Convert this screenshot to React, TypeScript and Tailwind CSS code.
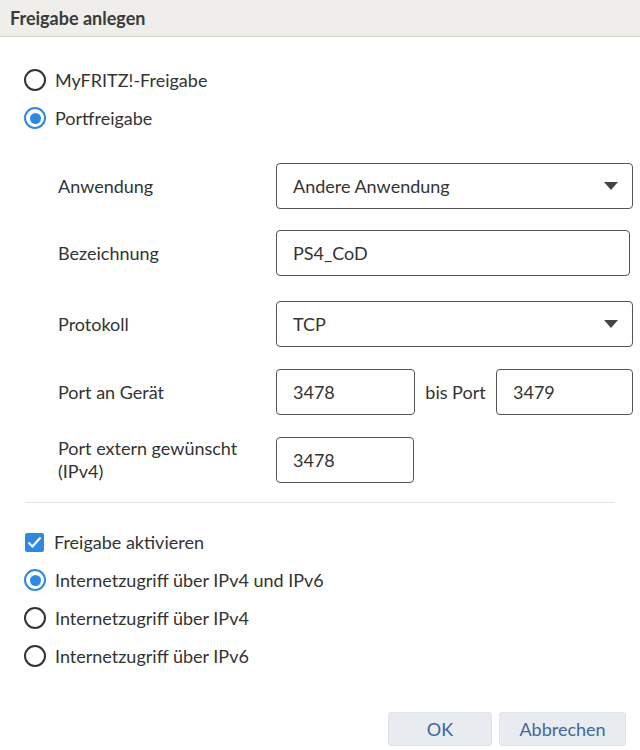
import React from 'react';

const font = { fontFamily: 'Lato, "Noto Sans", sans-serif' };

const Radio: React.FC<{ checked?: boolean; label: string }> = ({ checked, label }) => (
  <label className="flex h-[38px] items-center">
    {checked ? (
      <span className="flex h-[22px] w-[22px] items-center justify-center rounded-full border-[2.5px] border-[#2f89e0]">
        <span className="h-[11px] w-[11px] rounded-full bg-[#2f89e0]" />
      </span>
    ) : (
      <span className="h-[22px] w-[22px] rounded-full border-2 border-[#333]" />
    )}
    <span className="ml-[9px] text-[18px] text-[#333]">{label}</span>
  </label>
);

const Box: React.FC<{ value: string; w: string; select?: boolean }> = ({ value, w, select }) => (
  <div
    className={`flex h-[46px] items-center justify-between rounded-[4px] border border-[#555] bg-white pl-[16px] pr-[14px] text-[18px] text-[#333] ${w}`}
  >
    <span>{value}</span>
    {select && (
      <svg width="14" height="8" viewBox="0 0 14 8">
        <path d="M0 0h14L7 8z" fill="#444" />
      </svg>
    )}
  </div>
);

export default function App() {
  return (
    <div className="h-[750px] w-[640px] bg-white" style={font}>
      <div className="flex h-[37px] items-center border-b border-[#d4d3cf] bg-[#efeeea] pl-[10px]">
        <h1 className="text-[18px] font-bold text-[#3a3a3a]">Freigabe anlegen</h1>
      </div>

      <div className="pl-[24px] pt-[24px]">
        <Radio label="MyFRITZ!-Freigabe" />
        <Radio checked label="Portfreigabe" />
      </div>

      <div className="pl-[58px] pr-[7px] text-[18px] text-[#333]">
        <div className="mt-[26px] flex items-center">
          <span className="w-[218px]">Anwendung</span>
          <Box value="Andere Anwendung" w="w-[357px]" select />
        </div>
        <div className="mt-[21px] flex items-center">
          <span className="w-[218px]">Bezeichnung</span>
          <Box value="PS4_CoD" w="w-[354px]" />
        </div>
        <div className="mt-[25px] flex items-center">
          <span className="w-[218px]">Protokoll</span>
          <Box value="TCP" w="w-[357px]" select />
        </div>
        <div className="mt-[22px] flex items-center">
          <span className="w-[218px]">Port an Gerät</span>
          <Box value="3478" w="w-[139px]" />
          <span className="w-[81px] text-center">bis Port</span>
          <Box value="3479" w="w-[137px]" />
        </div>
        <div className="mt-[22px] flex items-center">
          <span className="w-[218px] leading-[23px]">
            Port extern gewünscht
            <br />
            (IPv4)
          </span>
          <Box value="3478" w="w-[138px]" />
        </div>
      </div>

      <div className="mx-[25px] mt-[19px] border-t border-[#e4e4e4]" />

      <div className="pl-[24px] pt-[20px]">
        <label className="flex h-[38px] items-center">
          <span className="ml-[1px] flex h-[19px] w-[19px] items-center justify-center rounded-[2px] bg-[#2f89e0]">
            <svg width="15" height="12" viewBox="0 0 15 12">
              <path d="M1.5 6.5l4 4L13.5 1.5" fill="none" stroke="#fff" strokeWidth="2.2" />
            </svg>
          </span>
          <span className="ml-[10px] text-[18px] text-[#333]">Freigabe aktivieren</span>
        </label>
        <Radio checked label="Internetzugriff über IPv4 und IPv6" />
        <Radio label="Internetzugriff über IPv4" />
        <Radio label="Internetzugriff über IPv6" />
      </div>

      <div className="mt-[37px] flex justify-end gap-[7px] pr-[14px]">
        <button className="h-[34px] w-[104px] rounded-[3px] border border-[#dfe3e8] bg-[#e8ecf0] text-[18px] text-[#3f66a0]">
          OK
        </button>
        <button className="h-[34px] w-[127px] rounded-[3px] border border-[#dfe3e8] bg-[#e8ecf0] text-[18px] text-[#3f66a0]">
          Abbrechen
        </button>
      </div>
    </div>
  );
}
